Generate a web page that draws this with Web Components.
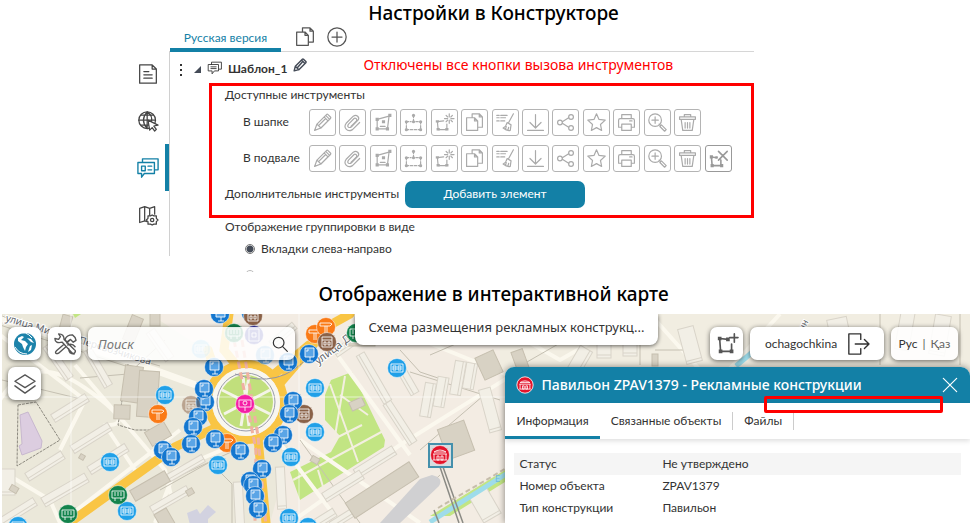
<!DOCTYPE html>
<html lang="ru">
<head>
<meta charset="utf-8">
<title>Настройки в Конструкторе</title>
<style>
  :root{--accent:#1380a6;--ink:#333;--ui:"Lato","Noto Sans",sans-serif;--wide:"Noto Sans",sans-serif;--body:12px}
  body{margin:0;background:#fff;color:var(--ink);font-family:var(--ui);font-size:var(--body)}
</style>
</head>
<body>
<guide-page></guide-page>
<script>
const define=(name,css,html,init)=>customElements.define(name,class extends HTMLElement{
  connectedCallback(){
    if(this.shadowRoot)return;
    const r=this.attachShadow({mode:'open'});
    r.innerHTML='<style>*{box-sizing:border-box}'+css+'</style>'+(typeof html==='function'?html(this):html);
    if(init)init(r,this);
  }
});

const ICONS={
  pencil:'<path d="M2 22l3-8L17 2q1-1 2 0l3 3q1 1 0 2L10 19zM5 14l5 5M14 5l5 5M16 3l5 5M7 16l9-9"/>',
  clip:'<path d="M14 7l-7 7q-2 3 0 4t4-1l8-8q2-3-.500-5t-5.500 0L4 13q-3 4 0 7.500t8 .5l9-9M10 17l7-7q1-2-.500-3T14 7"/>',
  poly:'<path d="M4 8l15-4-2 16H4zM8 17h6"/><g class="f"><path d="M2 6h4v4H2zM18 1h4v4h-4zM15 18h4v4h-4zM2 18h4v4H2zM10 9h4v4h-4z"/></g>',
  nodes:'<path d="M3 11v10M3 21h18M21 11v10M3 11h6M15 11h6M12 3v8" stroke-dasharray="3 2"/><g class="f"><circle cx="3" cy="11" r="2"/><circle cx="21" cy="11" r="2"/><circle cx="12" cy="3" r="2"/><circle cx="12" cy="11" r="2"/><circle cx="3" cy="21" r="2"/><circle cx="21" cy="21" r="2"/></g>',
  flash:'<path d="M3 11l8-1M3 11l1 10h11V14M18 1v4M18 9v4M12 7h4M20 7h4M14 3l2 2M20 9l2 2M22 3l-2 2M16 9l-2 2"/><g class="f"><path d="M1 9h4v3H1zM2 19h4v3H2zM13 19h4v3h-4z"/></g>',
  copy:'<path d="M9 6V1h9l4 4v13h-6M18 1v4h4M2 6h10l4 4v12H2zM12 6v4h4"/>',
  broom:'<path d="M1 3h3M6 3h8M1 6h3M6 6h6M1 10h3M6 10h5M22 1l-6 11M14 12l5 3M14 12q-1 5-5 7 5 4 9 3l1-7M13 17l-1 4M16 18l-1 4"/>',
  down:'<path d="M12 2v16M5 12l7 7 7-7M2 22h20"/>',
  share:'<path d="M8 11l8-5M8 13l8 5"/><circle cx="5" cy="12" r="3"/><circle cx="19" cy="5" r="3"/><circle cx="19" cy="19" r="3"/>',
  star:'<path d="M12 1l3 7 8 1-6 5.500L18.500 22 12 18.500 5.500 22 7 14.500 1 9l8-1z"/>',
  print:'<path d="M6 7V2h12v5M6 18H2V9q0-2 2-2h16q2 0 2 2v9h-4M6 14h12v8H6zM16 10h3"/>',
  zoom:'<circle cx="9" cy="9" r="8"/><path d="M9 5v8M5 9h8M14 14l1.500 1.500M15 17l2-2 6 6-2 2z"/>',
  trash:'<path d="M2 5h20v3H2zM8 5V2h8v3M4 8l2 14h12l2-14M9 12v7M12 12v7M15 12v7"/>',
  polyx:'<path d="M3 10l7 1M3 10l1 11h11V14M12 3l11 11M23 3L12 14" stroke-width="2"/><g class="f"><path d="M1 8h4v4H1zM2 19h4v4H2zM14 19h4v4h-4zM8 9h3v3H8z"/></g>',
  polyplus:'<path d="M4 6l9 1M4 6l1 14h12V12M20 1v9M15 5h9" stroke-width="1.800"/><g class="f"><path d="M2 4h4v4H2zM3 18h4v4H3zM15 18h4v4h-4zM11 5h4v4h-4z"/></g>',
  doc:'<path d="M2 1h15l5 5v17H2zM17 1v5h5M7 9h6M7 13h10M7 17h10"/>',
  globe:'<circle cx="11" cy="11" r="10"/><path d="M1 11h20M4 5h14M4 17h10M11 1v20M11 1q-9 10 0 20M11 1q7 5 5 12"/><path d="M12 11l12 6-5 1 3 4-2 2-3-4-3 3z" fill="#fff"/>',
  cards:'<path d="M6 5V2h17v12h-3M1 6h18v12H8l-3 4v-4H1zM5 10h4v5H5zM12 10h4M12 14h4"/>',
  mapcog:'<path d="M8 2v17l-6 2V4zM8 2l6 2v12M14 4l6-2v9M8 19l3 1M20 3v8"/><path d="M17 12l2 1 3 0 0 3 2 2-2 2 0 3-3 0-2 1-2-1-3 0 0-3-2-2 2-2 0-3 3 0z" fill="#fff"/><circle cx="17" cy="18" r="2"/>',
  plus:'<circle cx="12" cy="12" r="11"/><path d="M12 6v12M6 12h12"/>',
  chat:'<path d="M6 6V2h17v12h-4M1 6h17v11h-7l-4 5v-5H1zM5 10h9M5 13h9"/>',
  pen:'<path d="M2 22l2-8L16 2q1-1 2 0l4 4q1 1 0 2L10 20zM4 14l6 6M15 4l5 5M7 17l9-10" stroke-width="2.500"/>',
  lens:'<circle cx="10" cy="10" r="8"/><path d="M16 16l7 7"/>',
  exit:'<path d="M15 7V1H2v22h13v-6M9 12h15M19 7l5 5-5 5"/>',
  layers:'<path d="M12 2l11 7-11 7L1 9zM1 14l11 8 11-8"/>',
  close:'<path d="M2 2l20 20M22 2L2 22"/>',
  tools:'<path d="M9 10L20 22q2 1 3-1t-1-3L11 7Q11 1 5 1l2 3-2 3-4-1q0 6 8 4M10 13l-7 6q-2 2-1 3t3 0l8-7M14 11l4-4M12 7q2-5 8-5l3 3 1 3-3 2-3-3-4 3zM16 17q0 6 6 6M15 13q5-2 8 2"/>'
};
define('ui-icon',`:host{display:inline-flex;width:20px;height:20px;flex:none}svg{width:100%;height:100%;overflow:visible;fill:none;stroke:currentColor;stroke-width:var(--sw,1.5);stroke-linejoin:round;stroke-linecap:round}.f{fill:currentColor;stroke:none}`,
  h=>`<svg viewBox="0 0 24 24" aria-hidden="true">${ICONS[h.getAttribute('name')]}</svg>`);

define('page-title',`:host{display:block}h2{margin:0;padding-left:16px;text-align:center;color:#000;font:500 19px/27px var(--wide)}`,`<h2><slot></slot></h2>`);

define('side-nav',`:host{display:block;padding-top:23px}nav{display:flex;flex-direction:column}
button{height:47px;display:grid;place-items:center;border:0;border-right:4px solid transparent;background:none;padding:0;color:#444}
button.on{color:var(--accent);border-right-color:var(--accent)}button.on ui-icon{width:22px;height:22px}`,
`<nav><button aria-label="Документы"><ui-icon name="doc"></ui-icon></button><button aria-label="Сайт"><ui-icon name="globe"></ui-icon></button><button class="on" aria-label="Карточки"><ui-icon name="cards"></ui-icon></button><button aria-label="Карта"><ui-icon name="mapcog"></ui-icon></button></nav>`);

define('version-tabs',`:host{display:flex;align-items:stretch;height:25px;border-bottom:1px solid #d6d6d6;padding-left:1px}
button{border:0;background:none;padding:0;margin:0;color:#555}
.tab{width:111px;height:25px;border-bottom:4px solid var(--accent);color:var(--accent);font:var(--body)/20px var(--ui);white-space:nowrap}
.i{width:20px;height:20px;margin-left:14px}.i+.i{margin-left:12px}`,
`<button class="tab">Русская версия</button><button class="i" aria-label="Копировать"><ui-icon name="copy"></ui-icon></button><button class="i" aria-label="Добавить"><ui-icon name="plus"></ui-icon></button>`);

define('template-head',`:host{display:flex;align-items:center;height:31px;padding-left:11px;color:#333}
.dots{display:grid;gap:3px;padding:4px 0 0}.dots i{width:2px;height:2px;background:#333}
.tri{width:7px;height:7px;background:#444b57;clip-path:polygon(100% 0,100% 100%,0 100%);margin:4px 7px 0 12px}
ui-icon{width:14px;height:14px}b{font-size:var(--body);line-height:20px;margin:0 6px;padding-top:2px;font-weight:700}.p{color:#444b57;margin-bottom:6px}
.note{color:#f00;font:14px/20px var(--wide);padding-bottom:6px;margin-left:56px;white-space:nowrap}`,
`<span class="dots"><i></i><i></i><i></i></span><span class="tri"></span><ui-icon name="chat"></ui-icon><b>Шаблон_1</b><ui-icon class="p" name="pen"></ui-icon><span class="note">Отключены все кнопки вызова инструментов</span>`);

const TOOLS=[['pencil','Редактировать'],['clip','Прикрепить'],['poly','Контур'],['nodes','Узлы'],['flash','Подсветить'],['copy','Копировать'],['broom','Очистить'],['down','Скачать'],['share','Поделиться'],['star','Избранное'],['print','Печать'],['zoom','Приблизить'],['trash','Удалить'],['polyx','Удалить контур']];
define('tool-row',`:host{display:grid;grid-template-columns:66px 426px;align-items:center;height:36px;padding-left:18px;font-size:var(--body)}
div{display:grid;grid-template-columns:repeat(14,1fr)}
button{width:27px;height:27px;display:grid;place-items:center;padding:0;background:#fff;border:1px solid #b4b4b4;border-radius:3px;color:#aaa}button.d{color:#999;border-color:#999}
ui-icon{width:19px;height:19px}`,
h=>`<span><slot></slot></span><div>${TOOLS.slice(0,+h.getAttribute('count')).map(([n,l])=>`<button class="${n==='polyx'?'d':''}" aria-label="${l}"><ui-icon name="${n}"></ui-icon></button>`).join('')}</div>`);

define('tool-settings',`:host{display:block;margin-left:40px;border:3px solid #f00;height:135px;padding:0 0 0 13px;font-size:var(--body);line-height:18px}
.extra{display:flex;align-items:center;gap:12px;height:36px;white-space:nowrap}.extra span{width:168px}
button{width:180px;height:27px;border:0;border-radius:7px;background:var(--accent);color:#fff;font:var(--body)/20px var(--ui)}`,
`<div>Доступные инструменты</div><tool-row count="13">В шапке</tool-row><tool-row count="14">В подвале</tool-row><div class="extra"><span>Дополнительные инструменты</span><button>Добавить элемент</button></div>`);

define('group-view',`:host{display:block;padding-left:56px;font-size:var(--body);line-height:18px}
label{display:flex;align-items:center;gap:6px;height:26px;padding-left:20px}
input{appearance:none;width:10px;height:10px;margin:0;border:1px solid #777;border-radius:50%;background:radial-gradient(#444b57 0 3px,#fff 4px)}
.cut{height:2px;overflow:hidden;padding:8px 0 0 20px;opacity:.5;box-sizing:content-box}.cut input{background:#fff;display:block}`,
`<div>Отображение группировки в виде</div><label><input type="radio" name="g" checked>Вкладки слева-направо</label><div class="cut"><input type="radio" name="g" aria-label="Другой вид"></div>`);

define('constructor-view',`:host{display:grid;grid-template-columns:39px minmax(0,1fr);padding:0 217px 0 130px;min-height:245px}
main{min-width:0;position:relative}.line{position:absolute;left:0;top:25px;height:204px;width:1px;background:#d0d0d0}`,
`<side-nav></side-nav><main><span class="line"></span><version-tabs></version-tabs><template-head></template-head><tool-settings></tool-settings><group-view></group-view></main>`);

/* Map drawing: coordinates are in the units of the viewBox */
const SLABS=[[45,466,42,9,-32],[65,490,50,10,-30],[91,438,44,9,-32],[70,408,40,9,-32],[108,459,44,9,-32],[18,512,40,9,-32],[98,368,42,9,60],[58,362,40,9,55],[8,482,14,26,0],[186,468,40,8,-30],[170,500,42,9,-30],[374,378,55,9,60],[400,423,48,9,57],[428,400,34,11,-80],[441,392,30,11,-80],[458,378,34,11,-80],[470,376,26,11,-80],[375,462,45,10,-32],[343,486,44,10,-32],[406,378,36,9,60],[322,520,30,9,-32],[239,505,9,46,-3],[281,488,9,42,-3],[350,514,44,8,-32],[490,410,12,44,-15],[283,335,30,8,-40],[160,345,34,10,55],[345,347,24,8,-35],[690,345,16,36,-15],[580,360,26,14,-60],[604,342,14,32,0],[630,340,14,32,0],[905,330,14,40,10],[940,335,16,40,10],[840,335,20,34,-12],[485,505,20,30,-30]];
const BLD=[[132,384,18,36,8],[148,394,20,46,4],[122,412,16,14,2],[158,434,22,16,-30],[382,490,76,18,-33],[456,440,28,32,-20],[360,340,30,12,0],[133,329,12,26,22],[155,318,10,16,0],[64,330,10,30,15],[489,365,20,24,-25],[82,457,5,5,30],[14,489,8,6,30],[315,460,8,6,30],[357,404,14,9,-25],[190,492,7,6,-30],[165,520,14,20,-30],[150,486,40,12,-30],[520,360,12,20,-20],[655,360,6,12,0]];
const M=[['b',220,314],['b',251,313],['br',253,316],['g',234,333],['i',254,335],['c',201,349,.5],['b',265,355,.6],['b',214,367],['b',288,362],['b',205,402],['b',204,389],['br',191,405,.5],['b',198,417],['b',193,427],['b',191,444],['o',227,443],['b',215,439],['b',240,451],['c',218,465],['c',165,395],['o',158,414],['b',163,450],['b',171,457],['b',262,469],['b',250,481],['b',253,485],['b',255,496],['b',258,509],['br',304,414],['b',293,401],['b',289,414],['b',283,435],['b',273,443],['b',309,354],['o',315,334],['o',326,327],['br',327,342],['c',315,388],['c',315,432],['c',291,457],['c',289,518],['c',308,527],['c',110,462],['c',127,511],['c',18,526],['g',68,514],['g',118,495],['g',356,333],['c',397,368],['p',245,404]];
const COL={b:'#1477cf',c:'#20a0e8',br:'#8a6248',g:'#13834c',i:'#32309f',o:'#fa7a16',p:'#f51fa6',r:'#e3142b'};
const GL={b:'<path d="M-4-6H5V3H-4zM1 3V7M-2 7H4M-2-2v-2H0" fill="#5aa5e6"/>',c:'<path d="M-6-4H6V4H-6zM-4-2h3v4h-3zM1-2h3v4h-3zM-4 0H-1M1 0H4"/>',br:'<path d="M-5-5H5V5H-5zM-5-2H5M-3 0h2v3h-2zM1 0h2v3h-2z"/>',g:'<path d="M-6-4H6V3H-6zM-3 3v3M3 3v3M-3-3v4M0-3v4M3-3v4"/>',i:'<path d="M-5-6H5V6H-5zM-2-2h4v4h-4z"/>',o:'<path d="M-6-4H4l2 1-2 2H-6zM-1-1V6M1-1V6"/>',p:'<path d="M-6-4H6V3H-6zM0 3v4M-2-1a2 2 0 1 0 4 0a2 2 0 1 0-4 0"/>',r:'<path d="M-6-3q6-4 12 0zM-7-1H7M-6-1v6M6-1v6M-7 5H7M-3 1h2v4h-2zM1 1h2v4h-2z"/>'};
const mk=([t,x,y,o=1])=>`<g transform="translate(${x} ${y})" opacity="${o}"><circle r="9.500" fill="${COL[t]}" stroke="#fff" stroke-opacity=".5"/><g fill="none" stroke="#fff" stroke-opacity=".85">${GL[t]}</g></g>`;
const MAP=`<svg viewBox="2 314 968 209" preserveAspectRatio="xMinYMin slice" aria-hidden="true">
<path fill="#ebe8da" d="M0 310H975V530H0z"/><path fill="#f3ece3" d="M150 314L250 380 290 450 270 523H520V314z"/><path fill="#f1ede1" d="M500 314H971V380H500z"/>
<g fill="#c2e583"><path d="M325 395L331 380 352 372 385 440 384 447 300 500 290 472 331 452 340 436 325 420z"/><path d="M430 516L505 470V482L450 516zM73 314h8l-6 4z"/></g>
<g fill="none" stroke="#f3efe0" stroke-width="2"><path d="M293 480L385 430M330 384l28 78M345 376l-10 60M318 470l6 20M332 440l30-15M340 395l28 20"/></g>
<g fill="none" stroke="#fbf8ee" stroke-width="4" stroke-linejoin="round"><path stroke-width="7" d="M0 318L160 372 215 392"/><path d="M75 365L165 470 172 500M0 335L85 400 60 450M60 523L180 430M0 470L50 500 60 523M155 523L175 470 245 440M290 523L400 445 520 370M330 345L410 455M300 440L420 523M360 315L520 380M270 430L340 523M480 314L560 360 640 314M650 314L700 370M780 314L710 390M0 400Q30 350 85 388T105 425L135 470"/></g>
<g fill="none" stroke="#c5c0b2" stroke-width="1"><path d="M0 315L30 328 160 366M0 325L150 374M80 378L128 374 165 340M2 380L85 400"/><path d="M18 405L36 402 60 440 17 466zM128 364L118 425 135 430H150" stroke="#8d8a80" stroke-dasharray="3 1"/><path d="M170 480l70-32M160 490l50-28 22 22v40M300 440L360 523M400 350l20 22 18 6M430 355L500 325M410 372L500 400M420 450L490 390M390 523L440 475M505 340L620 314M520 366L600 320M640 314V365M655 350H700M880 314V365M960 314V365M760 330L800 350"/></g>
<g fill="none" stroke="#f9c544" stroke-linecap="round"><path stroke-width="9" d="M72 521L175 447 215 428M258 438L266 523M281 382L330 325 350 314M229 314L224 350 237 366M272 376L309 345M214 368L208 350"/><circle cx="246" cy="402" r="38" stroke-width="8"/></g>
<circle cx="246" cy="402" r="34" fill="#f8f6ef"/><circle cx="246" cy="402" r="29" fill="none" stroke="#999cab" stroke-width="1"/><circle cx="246" cy="402" r="27" fill="#c1df7c"/>
<path d="M222 390L270 414M270 390L224 414M243 376l6 50M249 376l-8 50" stroke="#f4f4e8" stroke-width="3"/><path d="M235 374Q280 390 309 356" fill="none" stroke="#9294a3"/>
<path d="M234 340l22 110-1 73M242 340l16 96 8 90" fill="none" stroke="#f0b1a1" stroke-width="3" stroke-dasharray="7 4"/>
<g fill="#f2efe6" stroke="#d9d4c9">${SLABS.map(([x,y,w,h,a])=>`<g transform="translate(${x} ${y}) rotate(${a})"><rect x="${-w/2}" y="${-h/2}" width="${w}" height="${h}"/><path d="M${-w/2} ${h/2-3}h${w}" fill="none"/></g>`).join('')}</g>
<g fill="#d8d2c4" stroke="#c6bfaf">${BLD.map(([x,y,w,h,a])=>`<rect x="${x-w/2}" y="${y-h/2}" width="${w}" height="${h}" transform="rotate(${a} ${x} ${y})"/>`).join('')}</g>
<path fill="#dccde0" stroke="#c8b8cf" d="M20 415l8-3 14 29-1 7-19 7-3-9 3-2z"/><path fill="#d2d2e0" d="M187 513l10-4 3 5 8-9 8 7-8 7v6h-18z"/><path fill="#d0d0d2" d="M380 523l40-44 12-4q12 3 7 11L400 523z"/>
<path d="M430 522L506 474M762 344L736 366" stroke="#9edcea" stroke-width="5"/><path d="M440 467L459 523M443 467L463 523M434 510l5 13" stroke="#8b8b85" stroke-width="1.500"/><path d="M438 508L510 466" stroke="#c6bdaa" stroke-width="2" stroke-dasharray="5 3"/>
<path d="M71 314V523M299 314V523M2 397H510" stroke="#fff" stroke-opacity=".6"/>
<g fill="#62666b" stroke="#fff" stroke-width="2" paint-order="stroke" font-family="Noto Sans,sans-serif" font-size="10"><text transform="translate(5 321) rotate(17)">улица Ми</text><text transform="translate(78 343) rotate(17)">Перевозчикова</text><text transform="translate(318 365) rotate(-37)" font-size="11">улица Ду</text><text transform="translate(799 340) rotate(-62)" font-size="9">Танн</text><text x="495" y="482" fill="#6eb8dc" stroke="none" font-size="9">Е</text></g>
${M.map(mk).join('')}<rect x="429" y="444" width="23" height="23" fill="#d6dde0" stroke="#4490ac" stroke-width="2"/>${mk(['r',440,455])}
</svg>`;
define('city-map',`:host{display:block;position:absolute;inset:0}svg{display:block;width:100%;height:100%}`,MAP);

define('map-toolbar',`:host{display:flex;justify-content:space-between;align-items:flex-start;padding:0 12px 0 6px;color:#333}
.g{display:flex;flex-wrap:wrap;gap:7px;padding-top:13px}.l{width:287px}
button,.lang,.search{height:33px;border:0;border-radius:7px;background:#fff;box-shadow:0 1px 5px #0009;display:flex;align-items:center;justify-content:center;padding:0;color:#555}
.sq{width:33px}.sq ui-icon{width:22px;height:22px}.search{width:207px;background:#ffffffd9;padding:0 7px 0 10px;color:#333}
input{flex:1;min-width:0;border:0;background:none;outline:0;padding:0;font:italic 13px/20px var(--wide)}input::placeholder{color:#777;opacity:1}
.search ui-icon{width:16px;height:16px;--sw:1.8}
h3{margin:0 0 0 8px;flex:none;width:303px;height:31px;background:#fff;border-radius:0 0 8px 8px;box-shadow:0 1px 4px #0009;text-align:center;font:13px/26px var(--wide);white-space:nowrap}
.user{width:134px;gap:10px;font:var(--body)/20px var(--ui);color:#333}.user ui-icon{width:22px;height:22px}
.lang{width:67px;gap:5px;font-size:var(--body);background:#ffffffe0}a{color:#333;text-decoration:none}a+a{color:#666}.globe{width:24px;height:24px}`,
`<div class="g l"><button class="sq" aria-label="Карта"><svg class="globe" viewBox="0 0 24 24"><circle cx="12" cy="12" r="11" fill="#1d83aa"/><path fill="#fff" d="M5 6l4-2 2 1-3 3 4 1 3 3-2 3-1 4-2-4-1-3-4-3zM14 6l4 1 3 4-3-1-2-2zM17 14l2-1-1 5-3 2z"/><path fill="none" stroke="#fff" d="M4 2q9-4 15 4M2 15q4 7 12 7"/></svg></button><button class="sq" aria-label="Инструменты"><ui-icon name="tools"></ui-icon></button><label class="search"><input aria-label="Поиск" placeholder="Поиск"><ui-icon name="lens"></ui-icon></label><button class="sq" aria-label="Слои"><ui-icon name="layers"></ui-icon></button></div>
<h3>Схема размещения рекламных конструкц...</h3>
<div class="g"><button class="sq" aria-label="Добавить контур"><ui-icon name="polyplus"></ui-icon></button><button class="user">ochagochkina<ui-icon name="exit"></ui-icon></button><div class="lang"><a href="#ru">Рус</a>|<a href="#kz">Қаз</a></div></div>`);

define('object-panel',`:host{display:block;justify-self:end;width:48%;background:#fff;border-radius:9px 9px 0 0;box-shadow:0 0 7px #0007;font-size:var(--body);position:relative;min-height:156px}
header{display:flex;align-items:center;height:36px;background:var(--accent);color:#fff;border-radius:9px 9px 0 0;padding:0 12px 0 11px}
header svg{width:18px;height:18px;flex:none;margin-right:7px}h3{margin:0;flex:1;font:500 14px/24px var(--wide);white-space:nowrap}
header button{border:0;background:none;padding:0;color:#fff;width:16px;height:16px}header ui-icon{width:16px;height:16px;--sw:1.8}
nav{display:flex;align-items:center;height:36px;box-shadow:0 2px 5px #0002}
nav button{height:36px;border:0;background:none;padding:2px 11px 0;border-bottom:3px solid transparent;font:var(--body)/20px var(--ui);color:#333;white-space:nowrap}
nav .on{border-color:var(--accent)}i{width:1px;height:18px;background:#ccc}
table{width:calc(100% - 18px);margin:14px 9px 0;border-collapse:collapse}td{height:22px;padding:0 5px;line-height:20px}td:first-child{width:143px}tr:first-child{background:#f5f5f5}
.mark{position:absolute;left:259px;right:27px;top:29px;height:17px;border:3px solid #f00;border-radius:2px}`,
`<header><svg viewBox="-11 -11 22 22"><circle r="10" fill="#e3142b" stroke="#fff"/><g fill="none" stroke="#fff">${GL.r}</g></svg><h3>Павильон ZPAV1379 - Рекламные конструкции</h3><button aria-label="Закрыть"><ui-icon name="close"></ui-icon></button></header>
<nav><button class="on">Информация</button><button>Связанные объекты</button><i></i><button>Файлы</button><i></i></nav>
<table><tr><td>Статус</td><td>Не утверждено</td></tr><tr><td>Номер объекта</td><td>ZPAV1379</td></tr><tr><td>Тип конструкции</td><td>Павильон</td></tr></table><span class="mark"></span>`);

define('interactive-map',`:host{display:grid;grid-template-areas:"a";position:relative;overflow:hidden;margin:0 1px 0 2px;flex:1;min-height:209px}
map-toolbar,object-panel{grid-area:a;z-index:1}object-panel{margin-top:53px}`,
`<city-map></city-map><map-toolbar></map-toolbar><object-panel></object-panel>`);

define('guide-page',`:host{display:flex;flex-direction:column;min-height:100vh}.t2{padding:9px 0 6px}`,
`<page-title>Настройки в Конструкторе</page-title><constructor-view></constructor-view><page-title class="t2">Отображение в интерактивной карте</page-title><interactive-map></interactive-map>`);
</script>
</body>
</html>
